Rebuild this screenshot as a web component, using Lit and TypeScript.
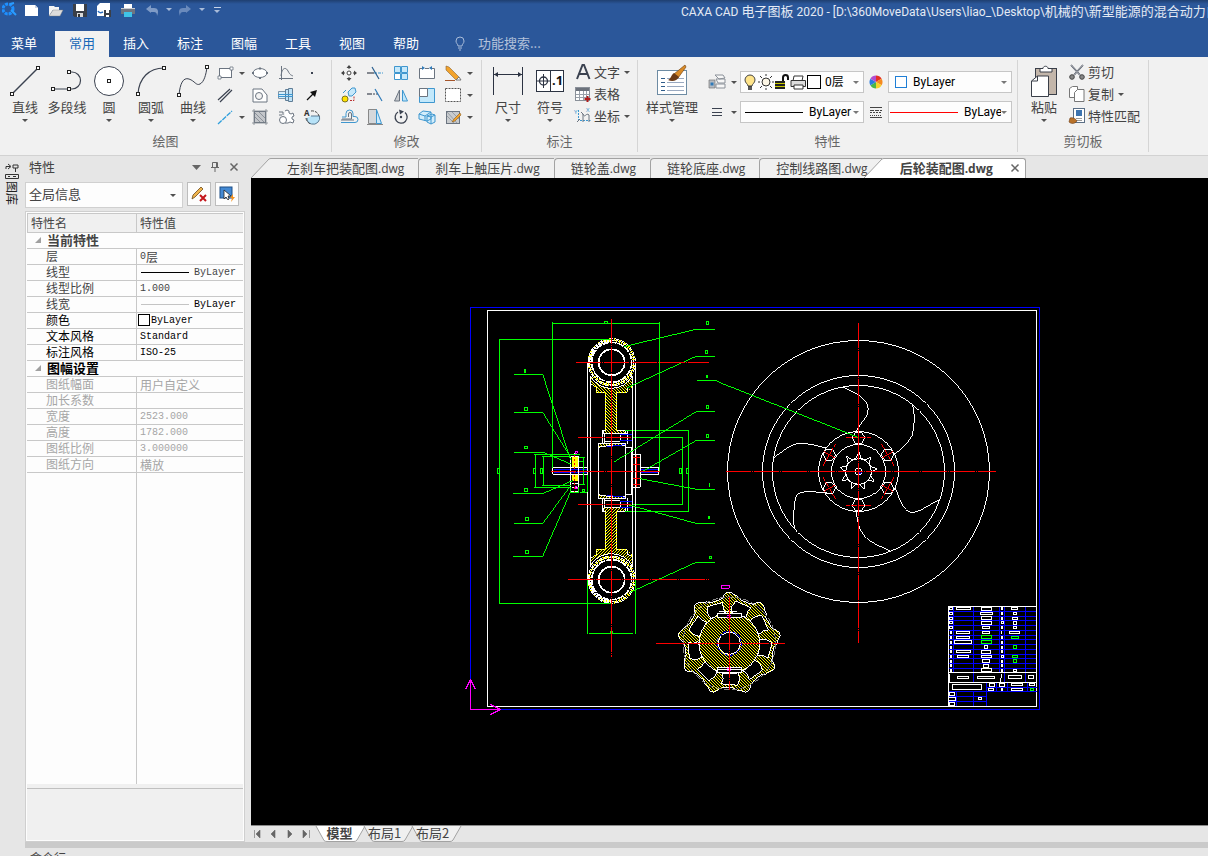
import { LitElement, html, svg, css, nothing, TemplateResult, SVGTemplateResult } from "lit";
import { customElement, property } from "lit/decorators.js";
import { classMap } from "lit/directives/class-map.js";

/* Latin runs are set a size smaller than the Chinese text round them. */
const mixed = (text: string) =>
  text.split(/([\x20-\x7e]+)/).map((part) => (/^[\x20-\x7e]+$/.test(part) ? html`<span class="latin">${part}</span>` : part));

const INK = "#3b4250";
const GREY = "#6b7480";
const BLUE = "#3f97cf";
const PALE = "#cdeafb";

type Art = SVGTemplateResult;

const node = (x: number, y: number): Art =>
  svg`<rect x=${x - 1.5} y=${y - 1.5} width="3" height="3" fill="#fff" stroke="#222" />`;

/* 36 x 36 ribbon pictures */
const big: Record<string, Art> = {
  line: svg`<path d="M5 31L31 5" stroke=${INK} stroke-width="1.4"/>${node(5, 31)}${node(31, 5)}`,
  poly: svg`<path d="M4 26H20M20 9h3a8.500 8.500 0 0 1 0 17h-3" stroke=${INK} stroke-width="1.200" fill="none"/>${node(4, 26)}${node(20, 26)}${node(20, 9)}`,
  circle: svg`<circle cx="18" cy="18" r="14.500" fill="#fff" stroke=${INK}/>${node(18, 18)}`,
  arc: svg`<path d="M5 31C6 15 16 5 31 5" stroke=${INK} fill="none" stroke-width="1.200"/>${node(5, 31)}${node(31, 5)}`,
  curve: svg`<path d="M4 32C5 21 8 14 14 16c6 2 7 7 11 5s6-9 7-17" stroke=${INK} fill="none"/>${node(4, 32)}${node(32, 4)}`,
  dim: svg`<path d="M3.500 4v28M32.500 4v28M4 11.500h28" stroke="#2c3342" fill="none"/><path d="M4 11.500l4-2.500v5zM32 11.500l-4-2.500v5z" fill="#2c3342"/>`,
  symbol: svg`<rect x="4.500" y="7.500" width="27" height="21" fill="#fff" stroke="#2c3342"/><path d="M18.500 8v20M5 18h13M11.500 11v14" stroke="#2c3342"/><circle cx="11.500" cy="18" r="4" fill="none" stroke="#2c3342" stroke-width="1.300"/><text x="20" y="22" class="glyph">.1</text>`,
  style: svg`<rect x="3.500" y="7.500" width="29" height="24" fill="#fff" stroke="#6d8ba3"/><path d="M7 15.500h4M7 19.500h4M7 23.500h4M7 27.500h4" stroke="#2f5c8a"/><path d="M13 15.500h17M13 19.500h17M13 23.500h17M13 27.500h17" stroke="#9aa9c0"/><path d="M31 2L20 11l4 4 8-11z" fill="#d98a26" stroke="#7b4a18" stroke-width=".7"/><path d="M20 10l5 4c-2 4-7 5-11 3 3-1 3-5 6-7z" fill="#6b3a16"/>`,
  paste: svg`<rect x="9.500" y="5.500" width="21" height="26" fill="#c3b6aa" stroke="#3a3f49"/><path d="M14 9V5.500h3c0-3 5-3 5 0h4V9z" fill="#fff" stroke="#3a3f49"/><path d="M5.500 33.500V18l6-5h11v20.500z" fill="#fff" stroke="#3a3f49"/><path d="M5.500 18h6v-5" fill="none" stroke="#3a3f49"/>`,
};

/* 20 x 20 ribbon pictures */
const small: Record<string, Art> = {
  rect: svg`<rect x="4.500" y="5.500" width="12" height="9" fill="#fff" stroke=${GREY}/><path d="M3 13h3v3H3zM15 4h3v3h-3z" fill="#fff" stroke=${GREY} stroke-width=".8"/>`,
  ellipse: svg`<ellipse cx="10" cy="10" rx="7" ry="4.500" fill="#fff" stroke=${GREY}/><path d="M9 4.500h2v2H9zM9 14h2v2H9zM2 9h2v2H2zM16 9h2v2h-2z" fill=${GREY}/>`,
  fx: svg`<path d="M5.500 3v14M3 15.500h14M5 13C6 4 10 4 12 8s3 4 5 5" fill="none" stroke=${GREY}/>`,
  point: svg`<path d="M9 9h2v2H9z" fill=${INK}/>`,
  parallel: svg`<path d="M3 15L15 4M5 17L17 5" stroke=${INK} stroke-width="1.200"/>`,
  region: svg`<path d="M3 4h9l5 6v7H3z" fill="#fff" stroke=${GREY}/><circle cx="9" cy="11" r="3.500" fill="#f3f3f3" stroke=${GREY}/>`,
  bolt: svg`<path d="M2.500 6.500h7v7h-7z" fill="#d7edf9" stroke="#7d95a8"/><path d="M9.500 4.500h3v11h-3zM12.500 3.500h4v13h-4z" fill="#bfe2f6" stroke="#607d96"/><path d="M2 9.500h15M2 11.500h15" stroke=${BLUE}/>`,
  arrow: svg`<path d="M5 15l6-6" stroke="#111" stroke-width="1.300"/><path d="M15 5l-2 7-5-5z" fill="#111"/>`,
  cline: svg`<path d="M3 17L17 4" stroke="#2f9fdc" stroke-width="1.300" stroke-dasharray="5 1"/>`,
  hatch: svg`<rect x="4.500" y="4.500" width="11" height="11" fill="#c3c6ca" stroke=${GREY}/><path d="M5 10l5 5M5 6l9 9M9 5l6 6M4 2v16M16 2v16M2 4h16M2 16h16" stroke="#7d858e" stroke-width=".8"/>`,
  gear: svg`<path d="M9 4l2-1 2 1v2l2 1 2-1 1 3-2 1v2l2 1-1 3-3-1-2 1H9" fill="#fff" stroke=${GREY}/><circle cx="7" cy="13" r="3.500" fill="#fff" stroke=${GREY}/><path d="M3 8h3M3 5h4v3" stroke=${GREY} fill="none"/>`,
  fill: svg`<path d="M9 9h8.500a6.500 6.500 0 0 1-8 8A6 6 0 0 1 5 11" fill="#b8e3f8" stroke="#5a7b93"/><path d="M9 4a7 7 0 0 1 8 5M4 11a7 7 0 0 0 5 6" fill="none" stroke="#444" stroke-dasharray="3 1"/><text x="2" y="9" class="mini">A</text>`,
  move: svg`<circle cx="10" cy="10" r="2" fill="#fff" stroke="#444"/><path d="M10 2l2.500 3h-5zM10 18l2.500-3h-5zM2 10l3-2.500v5zM18 10l-3-2.500v5z" fill="#444"/><path d="M10 4v2M10 14v2M4 10h2M14 10h2" stroke="#444"/>`,
  trim: svg`<path d="M2 10h7" stroke=${INK} stroke-width="1.200"/><path d="M9 10h9" stroke=${BLUE} stroke-dasharray="3 1"/><path d="M7 4l7 12" stroke="#2a5f8f" stroke-width="1.200"/>`,
  array: svg`<path d="M3.500 3.500h6v6h-6zM10.500 3.500h6v6h-6zM10.500 10.500h6v6h-6z" fill="#c6e8fa" stroke=${BLUE}/><path d="M3.500 10.500h6v6h-6z" fill="#fff" stroke=${BLUE}/>`,
  stretch: svg`<path d="M5 5.500H2.500v10h15v-10H15M8 5.500h4" fill="#fff" stroke=${GREY}/><path d="M5 3v4l3-2zM15 3v4l-3-2z" fill="#2f7ab8"/>`,
  erase: svg`<path d="M3 3l3 1 10 10-3 3L3 7z" fill="#f2a32c" stroke="#8a6336" stroke-width=".6"/><path d="M13 17l3-3 2 3z" fill="#fff" stroke="#777"/><path d="M2 17.500h10" stroke="#a5552a"/>`,
  copy: svg`<path d="M9 7l4-4h3l1 4-4 4h-3z" fill="#c6e8fa" stroke=${BLUE}/><circle cx="6" cy="14" r="3" fill="#ffe100" stroke="#7d7420"/><path d="M11 15.500h4v-4" stroke="#b33" fill="none" stroke-dasharray="2 1"/><path d="M4 8l3-3" stroke=${BLUE}/>`,
  extend: svg`<path d="M2 9h5" stroke=${INK} stroke-width="1.200"/><path d="M8 9h5" stroke=${INK} stroke-dasharray="2 1"/><path d="M10 4l7 12" stroke="#2f7ab8" stroke-width="1.200"/>`,
  mirror: svg`<path d="M8.500 5v11h-5z" fill="#c9ccd0" stroke=${GREY}/><path d="M11.500 5v11h5z" fill="#bfe6fa" stroke=${BLUE}/>`,
  scale: svg`<path d="M2.500 3.500h15v14h-15z" fill="#c2e8fb" stroke=${BLUE}/><path d="M2.500 3.500h8v8h-8z" fill="#fff" stroke=${GREY}/>`,
  dotted: svg`<rect x="2.500" y="3.500" width="15" height="13" fill="#fff" stroke="#555" stroke-dasharray="2 1"/>`,
  offset: svg`<path d="M2 15.500h14a3 3 0 0 0 0-6h-2V6.500a3.500 3.500 0 0 0-7 0V10H3" fill="none" stroke=${BLUE}/><path d="M2 13h13M9.500 10V7a1.500 1.500 0 0 1 3 0v5H3" fill="none" stroke=${GREY}/>`,
  draft: svg`<path d="M3.500 2.500h8v14h-8z" fill="#d5d8db" stroke="#888"/><path d="M11.500 2.500l5 14h-5z" fill=${PALE} stroke=${BLUE}/><path d="M2 17.500h16" stroke="#888"/>`,
  rotate: svg`<path d="M7 5A6 6 0 1 0 14 5.500" fill="none" stroke=${INK} stroke-width="1.300"/><path d="M8 2.500l5 2-4 3z" fill=${INK}/><circle cx="10" cy="10" r="1.200" fill=${INK}/>`,
  solid: svg`<path d="M2 7l4-3 8 1v7l-4 2-8-2zM10 9l5-2 3 1v7l-4 2-4-2z" fill="#d3edfb" stroke=${BLUE}/><path d="M2 7l6 2 6-4M8 9v5M10 9l4 1 4-2M14 10v7" fill="none" stroke=${BLUE}/>`,
  edit: svg`<rect x="3.500" y="4.500" width="13" height="12" fill="#c8cbce" stroke=${GREY}/><path d="M4 9l7 7M4 5l10 11M9 5l7 7" stroke="#8b929a" stroke-width=".8"/><path d="M17 6l-6 6-2 3 3-1 6-6z" fill="#f2a32c" stroke="#8a5a1c" stroke-width=".6"/>`,
  text: svg`<path d="M4 17L9.500 3h1.500L16.500 17M6 12h8" fill="none" stroke=${INK} stroke-width="2"/>`,
  sheet: svg`<rect x="2.500" y="3.500" width="14" height="13" fill="#fff" stroke="#8a9099"/><path d="M3 4h13v3H3z" fill="#6c727c"/><path d="M3 10.500h13M3 13.500h13M6.500 7v9M10.500 7v9M13.500 7v9" stroke="#9aa1aa"/><path d="M14.500 12v6M11.500 15h6" stroke="#b01c1c" stroke-width="2"/>`,
  coord: svg`<path d="M5.500 4v10.500h12" fill="none" stroke=${BLUE} stroke-dasharray="2 1"/><path d="M8 6l2 2v8M10 8c2 5 3-2 6 1v7M4 16l3-3" fill="none" stroke=${GREY}/><text x="1" y="8" class="tag">Y</text><text x="13" y="6" class="tag">X</text>`,
  layers: svg`<path d="M8 3h8l2 3-6 1zM9 7h9v4h-7zM9 12h9v4H9z" fill="#f7f7f7" stroke="#8b9199"/><path d="M2 8h6v8H2z" fill="#b5bac1" stroke="#777" stroke-width=".7"/><path d="M3.500 10.500h3v3h-3z" fill="#2f7ab8"/>`,
  weight: svg`<path d="M5 6.500h10M5 10.500h10M5 13.500h10" stroke=${INK} stroke-width="1"/>`,
  wheel: svg`<g stroke="none"><path d="M10 10V3.500a6.500 6.500 0 0 1 5.600 3.200z" fill="#e53125"/><path d="M10 10l5.600-3.300a6.500 6.500 0 0 1 0 6.500z" fill="#f58a1f"/><path d="M10 10l5.600 3.200a6.500 6.500 0 0 1-5.600 3.300z" fill="#f5d32a"/><path d="M10 10v6.500a6.500 6.500 0 0 1-5.600-3.300z" fill="#49b649"/><path d="M10 10l-5.600 3.200a6.500 6.500 0 0 1 0-6.500z" fill="#2a7be0"/><path d="M10 10L4.400 6.700A6.500 6.500 0 0 1 10 3.500z" fill="#b24ed0"/></g>`,
  ltype: svg`<path d="M4 5.500h12M4 15.500h12" stroke="#444"/><path d="M4 8.500h12" stroke="#444" stroke-dasharray="4 1"/><path d="M4 10.500h12" stroke="#444" stroke-dasharray="2 1"/><path d="M4 13.500h12" stroke="#444" stroke-dasharray="1 1"/>`,
  cut: svg`<path d="M4 3l9 10M16 3L7 13" stroke=${INK} stroke-width="1.600"/><path d="M4 3l9 10M16 3L7 13" stroke="#eef0f2" stroke-width=".6"/><circle cx="5" cy="15" r="2.300" fill="#888" stroke="#444"/><circle cx="15" cy="15" r="2.300" fill="#888" stroke="#444"/>`,
  dup: svg`<path d="M2.500 13.500v-9l3-2h5v11z" fill="#fff" stroke="#777"/><path d="M7.500 17.500v-9l3-3h6.500v12z" fill="#fff" stroke="#777"/>`,
  match: svg`<rect x="6.500" y="2.500" width="11" height="14" fill="#fff" stroke="#5b6f86"/><path d="M9 4h6v6H9z" fill="#3d74b0"/><path d="M9 12.500h6M9 14.500h6" stroke="#999"/><path d="M3 12c3-1 6 1 7 3-2 3-6 3-8 1z" fill="#b9722a" stroke="#6b3a16" stroke-width=".6"/>`,
};

/* 16 x 16 title bar and combo pictures */
const tiny: Record<string, Art> = {
  file: svg`<path d="M1 3h10l3 3v8H1z" fill="#fff"/><path d="M11 3v3h3z" fill="#c9d3e4"/>`,
  open: svg`<path d="M1 14V4h5l1 1h4v3H5z" fill="#f4f4f4"/><path d="M5 8h10l-3 6H1z" fill="#dcdcdc" stroke="#7a7a7a" stroke-width=".4"/>`,
  save: svg`<path d="M1 2h14v13H2.500L1 13.500z" fill="#3a3f48"/><path d="M4 2h8v7H4z" fill="#fff"/><path d="M5 11h6v4H5z" fill="#d9d9d9"/><path d="M6 12h2v3H6z" fill="#333"/>`,
  saveas: svg`<path d="M4 1h10v13H1V4z" fill="#fff"/><path d="M8 8h7v7H8z" fill="#3a3f48"/><path d="M10 8h3v3h-3zM10 13h3v2h-3z" fill="#fff"/><path d="M2 9c1 2 3 2 5 1" stroke="#2d6fc0" fill="none" stroke-width="1.500"/>`,
  print: svg`<path d="M4 2h8v4H4z" fill="#fff"/><path d="M1 6h14v6H1z" fill="#6e7480"/><path d="M1 6h14v1H1z" fill="#c8ccd2"/><path d="M4 10h8v5H4z" fill="#3fc3e8"/>`,
  undo: svg`<path d="M2 7l5-4v8zM6 6h4c4 0 5 3 3 8 0-3-1-4-3-4H6z" fill="#7f9bc6"/>`,
  redo: svg`<path d="M14 7L9 3v8zM10 6H6c-4 0-5 3-3 8 0-3 1-4 3-4h4z" fill="#6a8abc"/>`,
  bulb: svg`<path d="M6 12c0-2-3-3-3-6a5 5 0 0 1 10 0c0 3-3 4-3 6z" fill="#ffe48a" stroke="#444"/><path d="M6 13h4M6 15h4" stroke="#222" stroke-width="1.500"/>`,
  sun: svg`<circle cx="8" cy="8" r="4" fill="#fdf7e6" stroke="#333"/><path d="M8 0v2M8 14v2M0 8h2M14 8h2M2 2l2 2M12 12l2 2M2 14l2-2M12 4l2-2" stroke="#333"/>`,
  lock: svg`<path d="M9 8V3.500a2.500 2.500 0 0 1 5 0V6" fill="none" stroke="#111" stroke-width="2"/><path d="M1 7h10v2H1zM1 10h10v2H1zM1 13h10v2H1z" fill="#222"/><path d="M1 9.500h10M1 12.500h10" stroke="#c8c800"/>`,
  printer: svg`<path d="M4 2h9l-1 5H3z" fill="#fff" stroke="#333"/><path d="M1 6.500h14.500v6H1z" fill="#ddd" stroke="#333"/><path d="M4 11h9v4H4z" fill="#fff" stroke="#333"/>`,
  swatch: svg`<rect x="1.500" y="1.500" width="13" height="13" fill="#fff" stroke="#000"/>`,
  cyan: svg`<rect x="2.500" y="2.500" width="11" height="11" fill="#fff" stroke="#1f7fd6"/>`,
  lamp: svg`<path d="M6 11c0-2-2-2.500-2-5a4 4 0 0 1 8 0c0 2.500-2 3-2 5zM6 13h4M7 15h2" fill="none" stroke="#a9bcd9"/>`,
  app: svg`<circle cx="6" cy="7" r="5" fill="none" stroke="#1e90ff" stroke-width="3" stroke-dasharray="3 1"/><path d="M9 8l5 5M8 2l4-1" stroke="#2a9cff" stroke-width="2"/>`,
  delpen: svg`<path d="M1 13l1-4 8-8 2 2-8 8z" fill="#f0b44c" stroke="#6b4a1c" stroke-width=".8"/><path d="M9 9l6 6M15 9l-6 6" stroke="#c4161c" stroke-width="2"/>`,
  pick: svg`<rect x="1" y="1" width="12" height="11" fill="#4389d3" stroke="#1f4f86"/><path d="M5 4v9l2-2 2 3 1-1-1-3h3z" fill="#fff" stroke="#222" stroke-width=".8"/><path d="M14 8l-3 4h2l-1 4 4-5h-2z" fill="#f7931e"/>`,
  pin: svg`<path d="M5.500 3.500h5v5h-5zM4 8.500h8M8 9v4M9.500 4v5" fill="none" stroke="#666"/>`,
  close: svg`<path d="M4.500 4.500l7 7M11.500 4.500l-7 7" stroke="#666" stroke-width="1.500"/>`,
  down: svg`<path d="M4 6h9l-4.500 5z" fill="#666"/>`,
};

const icon = (set: Record<string, Art>, name: string, size: number) =>
  html`<svg width=${size} height=${size} viewBox="0 0 ${size} ${size}" fill="none" aria-hidden="true">${set[name]}</svg>`;
const caret = html`<span class="caret" aria-hidden="true"></span>`;

const iconText = css`
  .glyph { font: bold 13px "Noto Sans", sans-serif; fill: #111; }
  .mini { font: bold 8px "Noto Sans", sans-serif; fill: #333; }
  .tag { font: 6px "Noto Sans", sans-serif; fill: #3f97cf; }
  .latin { font-family: "Open Sans", sans-serif; font-size: 12px; white-space: pre; }
  .caret { flex: none; width: 0; height: 0; border: 3px solid transparent; border-top-color: #505050; border-bottom: 0; }
  svg { display: block; flex: none; }
  button { border: 0; padding: 0; background: none; color: inherit; font: inherit; white-space: nowrap; }
  * { box-sizing: border-box; }
`;

@customElement("cad-ribbon")
export class CadRibbon extends LitElement {
  static styles = [
    iconText,
    css`
      :host { display: flex; height: 99px; padding-top: 3px; background: #f1f1f1; border-bottom: 1px solid #d2d2d2; color: #444; font-size: 13px; line-height: 16px; }
      .group { flex: none; display: flex; flex-direction: column; height: 92px; border-right: 1px solid #d5d5d5; }
      .body { display: flex; height: 73px; padding-top: 2px; }
      .name { text-align: center; color: #666; }
      .draw { width: 332px; }
      .modify { width: 150px; }
      .annotate { width: 156px; }
      .props { width: 380px; }
      .clip { width: 131px; }
      .clip .body, .props .body { padding-left: 3px; }
      .draw .body { padding-left: 4px; }
      .annotate .body { padding-left: 5px; }
      .large { display: flex; flex-direction: column; align-items: center; width: 42px; height: 67px; padding-top: 1px; }
      .large .caret { margin-top: 4px; }
      .wide { width: 62px; }
      .grid { display: grid; grid-template-columns: 35px 26px 26px 26px; grid-auto-rows: 22px; }
      .modify .grid { grid-template-columns: repeat(4, 26px) 36px; margin-left: 6px; }
      .tool { display: flex; align-items: center; gap: 4px; padding-left: 1px; }
      .list { display: grid; grid-auto-rows: 22px; margin-left: 2px; }
      .row { display: flex; align-items: center; gap: 1px; height: 20px; }
      .row .caret { margin-left: 3px; }
      .clip .list { margin-left: 0; }
      .clip .large { width: 46px; }
      .combos { display: grid; grid-template-columns: 34px 124px 24px 124px; grid-auto-rows: 22px; row-gap: 8px; align-items: center; margin: 9px 0 0 3px; }
      .combo { display: flex; align-items: center; height: 22px; border: 1px solid #c6c6c6; background: #fdfdfd; color: #000; padding-left: 1px; overflow: hidden; }
      .combo select { appearance: none; flex: 1; min-width: 0; height: 20px; padding: 0 0 0 3px; border: 0; background: none; color: #000; font: 12px Roboto, "Noto Sans CJK SC", sans-serif; }
      .combo .caret { margin-right: 4px; border-top-color: #777; }
      .wide-gap { padding-left: 4px; }
      .wide-gap select { padding-left: 4px; }
      .sample { flex: none; width: 58px; height: 1px; margin: 0 3px; background: #000; }
      .red { width: 68px; background: #f00; margin: 0 3px 0 0; }
      .wheel { justify-self: center; }
    `,
  ];

  private large(name: string, label: string, arrow = true, wide = false) {
    return html`<button class=${classMap({ large: true, wide })}>${icon(big, name, 36)}<span>${label}</span>${arrow ? caret : nothing}</button>`;
  }
  private tool(name: string, label: string, arrow = false) {
    return html`<button class="tool" aria-label=${label}>${icon(small, name, 20)}${arrow ? caret : nothing}</button>`;
  }
  private row(name: string, label: string, arrow = false) {
    return html`<button class="row">${icon(small, name, 20)}<span>${label}</span>${arrow ? caret : nothing}</button>`;
  }
  private group(cls: string, label: string, body: TemplateResult) {
    return html`<section class="group ${cls}" aria-label=${label}><div class="body">${body}</div><div class="name">${label}</div></section>`;
  }

  render() {
    return html`
      ${this.group("draw", "绘图", html`
        ${this.large("line", "直线")}${this.large("poly", "多段线", false)}${this.large("circle", "圆")}
        ${this.large("arc", "圆弧")}${this.large("curve", "曲线")}
        <div class="grid">
          ${this.tool("rect", "矩形", true)}${this.tool("ellipse", "椭圆")}${this.tool("fx", "公式曲线")}${this.tool("point", "点")}
          ${this.tool("parallel", "平行线")}${this.tool("region", "局部放大")}${this.tool("bolt", "轴")}${this.tool("arrow", "箭头")}
          ${this.tool("cline", "中心线", true)}${this.tool("hatch", "剖面线")}${this.tool("gear", "齿轮")}${this.tool("fill", "填充")}
        </div>`)}
      ${this.group("modify", "修改", html`
        <div class="grid">
          ${this.tool("move", "平移")}${this.tool("trim", "裁剪")}${this.tool("array", "阵列")}${this.tool("stretch", "拉伸")}${this.tool("erase", "删除", true)}
          ${this.tool("copy", "平移复制")}${this.tool("extend", "延伸")}${this.tool("mirror", "镜像")}${this.tool("scale", "缩放")}${this.tool("dotted", "分解", true)}
          ${this.tool("offset", "等距线")}${this.tool("draft", "过渡")}${this.tool("rotate", "旋转")}${this.tool("solid", "打断")}${this.tool("edit", "编辑", true)}
        </div>`)}
      ${this.group("annotate", "标注", html`
        ${this.large("dim", "尺寸")}${this.large("symbol", "符号")}
        <div class="list">${this.row("text", "文字", true)}${this.row("sheet", "表格")}${this.row("coord", "坐标", true)}</div>`)}
      ${this.group("props", "特性", html`
        ${this.large("style", "样式管理", true, true)}
        <div class="combos">
          ${this.tool("layers", "图层", true)}
          <div class="combo">
            ${icon(tiny, "bulb", 16)}${icon(tiny, "sun", 16)}${icon(tiny, "lock", 16)}${icon(tiny, "printer", 16)}${icon(tiny, "swatch", 16)}
            <select aria-label="当前图层"><option>0层</option></select>${caret}
          </div>
          <span class="wheel">${icon(small, "wheel", 20)}</span>
          <div class="combo wide-gap">${icon(tiny, "cyan", 16)}<select aria-label="颜色"><option>ByLayer</option></select>${caret}</div>
          ${this.tool("weight", "线型", true)}
          <div class="combo"><span class="sample"></span><select aria-label="线型"><option>ByLayer</option></select>${caret}</div>
          <span class="wheel">${icon(small, "ltype", 20)}</span>
          <div class="combo"><span class="sample red"></span><select aria-label="线宽"><option>ByLayer</option></select>${caret}</div>
        </div>`)}
      ${this.group("clip", "剪切板", html`
        ${this.large("paste", "粘贴")}
        <div class="list">${this.row("cut", "剪切")}${this.row("dup", "复制", true)}${this.row("match", "特性匹配")}</div>`)}
    `;
  }
}

interface Prop { name: string; value?: string; kind?: "line" | "thin" | "swatch"; tone?: "dark" | "off"; head?: boolean; }

const PROPS: Prop[] = [
  { name: "当前特性", head: true },
  { name: "层", value: "0层" },
  { name: "线型", value: "ByLayer", kind: "line" },
  { name: "线型比例", value: "1.000" },
  { name: "线宽", value: "ByLayer", kind: "thin" },
  { name: "颜色", value: "ByLayer", kind: "swatch", tone: "dark" },
  { name: "文本风格", value: "Standard", tone: "dark" },
  { name: "标注风格", value: "ISO-25", tone: "dark" },
  { name: "图幅设置", head: true, tone: "dark" },
  { name: "图纸幅面", value: "用户自定义", tone: "off" },
  { name: "加长系数", value: "", tone: "off" },
  { name: "宽度", value: "2523.000", tone: "off" },
  { name: "高度", value: "1782.000", tone: "off" },
  { name: "图纸比例", value: "3.000000", tone: "off" },
  { name: "图纸方向", value: "横放", tone: "off" },
];

@customElement("cad-properties")
export class CadProperties extends LitElement {
  static styles = [
    iconText,
    css`
      :host { display: flex; flex-direction: column; width: 220px; flex: none; color: #444; font-size: 13px; }
      .head { display: flex; align-items: center; height: 26px; padding: 0 2px 4px 4px; }
      .head h2 { flex: 1; margin: 0; font-size: 13px; font-weight: 400; line-height: 18px; }
      .head button { width: 19px; display: flex; justify-content: center; }
      .pick { display: flex; gap: 4px; height: 26px; padding-right: 6px; }
      .pick .box { flex: 1; display: flex; align-items: center; border: 1px solid #d0d0d0; background: #fdfdfd; }
      .pick select { appearance: none; flex: 1; border: 0; background: none; padding: 0 3px 3px; font: inherit; color: #444; }
      .pick .caret { margin-right: 6px; }
      .pick button { width: 24px; height: 24px; display: grid; place-items: center; border: 1px solid #bdbdbd; background: #fdfdfd; }
      .frame { flex: 1; display: flex; flex-direction: column; margin-top: 3px; border: 1px solid #cfcfcf; padding: 1px; background: #fdfdfd; min-height: 0; }
      .body { flex: 1; display: flex; flex-direction: column; min-height: 0; }
      table { border-collapse: separate; border-spacing: 0; table-layout: fixed; width: 100%; font-size: 12px; line-height: 13px; }
      th, td { text-align: left; vertical-align: top; font-weight: 400; padding: 0; height: 16px; border-bottom: 1px solid #c8c8c8; white-space: nowrap; }
      th { height: 20px; background: #f0f0f0; border: 1px solid #c8c8c8; border-right: 0; padding: 2px 0 0 3px; }
      td:first-child { padding-left: 19px; }
      td + td { border-left: 1px solid #c8c8c8; padding-left: 3px; }
      .name { width: 109px; }
      .section td:first-child { padding-left: 8px; font-weight: 700; font-size: 13px; }
      .section .in { gap: 6px; height: 13px; }
      .tri { border: 3px solid #a0a0a0; border-top-color: transparent; border-left-color: transparent; }
      .in { display: flex; align-items: center; height: 14px; }
      .latin { font: 10px "Liberation Mono", monospace; padding-top: 1px; }
      .rest { flex: 1; display: flex; }
      .rest::before { content: ""; width: 109px; border-right: 1px solid #c8c8c8; margin-right: 1px; }
      .dark, .black { color: #000; }
      .off { color: #a6a6a6; }
      .stroke { width: 48px; height: 1px; margin: 0 5px 0 1px; background: #000; }
      .pale { background: #c4c4c4; }
      .swatch { width: 12px; height: 12px; margin-left: -2px; margin-right: 1px; border: 1px solid #000; background: #fff; }
      .help { height: 56px; background: #f0f0f0; padding-top: 4px; }
      .help::before { content: ""; display: block; height: 1px; background: #c0c0c0; }
    `,
  ];

  private value(p: Prop) {
    const mark = p.kind === "line" ? html`<span class="stroke"></span>`
      : p.kind === "thin" ? html`<span class="stroke pale"></span>`
      : p.kind === "swatch" ? html`<span class="swatch"></span>` : nothing;
    return html`<div class=${classMap({ in: true, black: p.kind === "thin" })}>${mark}${mixed(p.value ?? "")}</div>`;
  }

  render() {
    return html`
      <div class="head"><h2>特性</h2>
        <button aria-label="菜单">${icon(tiny, "down", 16)}</button>
        <button aria-label="固定">${icon(tiny, "pin", 16)}</button>
        <button aria-label="关闭">${icon(tiny, "close", 16)}</button>
      </div>
      <div class="pick">
        <label class="box"><select aria-label="选择对象"><option>全局信息</option></select>${caret}</label>
        <button aria-label="清除选择">${icon(tiny, "delpen", 16)}</button>
        <button aria-label="快速选择">${icon(tiny, "pick", 16)}</button>
      </div>
      <div class="frame">
        <div class="body">
          <table>
            <thead><tr><th class="name">特性名</th><th>特性值</th></tr></thead>
            <tbody>${PROPS.map((p) => p.head
              ? html`<tr class="section ${p.tone ?? ""}"><td colspan="2"><div class="in"><span class="tri"></span>${p.name}</div></td></tr>`
              : html`<tr class=${p.tone ?? ""}><td>${p.name}</td><td>${this.value(p)}</td></tr>`)}</tbody>
          </table>
          <div class="rest"></div>
        </div>
        <div class="help"></div>
      </div>`;
  }
}

/* ---- drawing geometry; each view is laid out in thirds of a screen pixel ---- */
const polar = (cx: number, cy: number, r: number, deg: number) => {
  const a = (deg * Math.PI) / 180;
  return [cx + r * Math.cos(a), cy + r * Math.sin(a)];
};
const pts = (list: number[][]) => list.map((p) => p.map((n) => n.toFixed(1)).join(",")).join(" ");
const box = (x: number, y: number, w: number, h: number, cls = "w") =>
  svg`<rect class=${cls} x=${x - w / 2} y=${y - h / 2} width=${w} height=${h} />`;

const LEADERS = [
  "432,140 648,88 705,88", "440,264 648,169 705,169", "652,241 705,241 720,247", "402,486 650,334 705,334",
  "490,513 650,421 705,421", "480,536 650,568 705,568", "440,613 648,670 705,670", "450,877 648,787 705,787",
  "101,223 188,223 272,480", "101,337 188,337 272,472", "101,457 190,457 272,492", "98,580 190,580 280,541",
  "101,670 188,670 268,563", "98,769 188,769 272,575",
];
const MARKS = [
  [682, 69, 6, 9], [679, 156, 6, 9], [681, 229, 2, 6], [682, 321, 6, 9], [682, 408, 6, 9], [689, 555, 2, 9], [687, 652, 2, 6],
  [691, 772, 6, 6], [135, 213, 2, 9], [138, 327, 9, 9], [138, 442, 9, 6], [138, 570, 9, 9], [141, 657, 9, 9], [141, 756, 9, 9],
  [55, 513, 6, 15], [163, 513, 6, 15], [185, 513, 6, 15], [603, 514, 6, 15], [622, 514, 6, 15], [377, 67, 9, 6], [394, 997, 6, 6], [311, 572, 6, 6],
];

const half = (flip: boolean) => svg`
  <g transform=${flip ? "translate(0 1026) scale(1 -1)" : ""}>
    <path class="w hatch" d="M331 228A72 72 0 0 0 457 228V258L442 263V277H411V391H437V402H371V391H378V277H349V262L331 250Z"/>
    <path class="y dots" d="M331 228V250L349 262V277H378V391M411 391V277H442L457 258V228"/>
    <circle class="w black" cx="395" cy="187" r="67"/>
    <circle class="rim" cx="395" cy="187" r="67"/>
    <path class="rim pale" d="M395 120A67 67 0 0 0 328 187"/>
    <circle class="w" cx="395" cy="187" r="71" stroke-dasharray="14 3"/>
    <circle class="y" cx="395" cy="187" r="71" stroke-dasharray="3 14"/>
    <circle class="w thick" cx="395" cy="187" r="60" stroke-dasharray="20 3"/>
    <circle class="w thick" cx="395" cy="187" r="39" />
    <path class="w" d="M367 391V432M373 402V428M442 391V432M373 402H442M421 402V424H373"/>
    <path class="b" d="M421 403H455M421 422H455"/>
    <path class="w hatch" d="M355 430H437V436C400 440 385 434 355 442Z"/>
    <path class="b" d="M380 440L437 434"/>
    <path class="g" d="M435 391H628M455 412H610"/>
  </g>`;

const sideView = svg`
  <g transform="translate(480 300) scale(.333333)">
    ${half(false)}${half(true)}
    <path class="w" d="M322 187V838M331 228V800M457 228V800M466 187V838"/>
    <path class="w" d="M355 430V597M437 430V597M437 442H455V583H437M455 463H481V562H455Z"/>
    <path class="w" d="M322 502H218V523H322M482 502H537V523H482"/>
    <path class="b" d="M221 508H320M221 519H320M482 508H534M482 519H534"/>
    <rect class="w" x="272" y="469" width="24" height="105"/>
    <rect x="275" y="472" width="20" height="30" fill="#ff0"/><rect x="275" y="524" width="20" height="18" fill="#ff0"/>
    <path class="w" d="M284 458V470M275 552H296M275 562H296"/>
    <path class="m" d="M286 454h6v6h-6zM286 561h6v6h-6z"/>
    <path class="r" d="M284 466V575" stroke-dasharray="6 6"/>
    <path class="g" d="M58 118V910M58 118H395M58 910H395M217 66V503M217 70H538M538 66V515M322 838V1003M466 838V1003M328 1002H460"/>
    <path class="g" d="M625 391V634M607 412V613M162 463H300M166 463V562M162 562H272M190 469V556M187 469H272M187 556H272M298 472H314M311 472V553M298 484H311M298 553H314M322 525V577H300M272 562V577H296V560"/>
    ${LEADERS.map((l) => svg`<polyline class="g" points=${l} />`)}
    ${MARKS.map(([x, y, w, h]) => box(x, y, w, h, "g"))}
    <path class="r centre" d="M394 57V1070M288 187H687M294 412H457M213 514H540M294 613H457M264 838H687"/>
    <path class="r" d="M469 464V560M459 472H479M459 493H479M459 535H479M459 553H479"/>
  </g>`;

const star: number[][] = [];
for (let k = 0; k < 9; k++) {
  star.push(polar(415, 454, 40, -100 + 40 * k), polar(415, 454, 57, -88 + 40 * k), polar(415, 454, 40, -78 + 40 * k));
}
const hexagon = (cx: number, cy: number) => pts([0, 60, 120, 180, 240, 300].map((a) => polar(cx, cy, 19, a)));

const wheelView = svg`
  <g transform="translate(720 320) scale(.333333)">
    ${[393, 288, 258, 120, 81, 10].map((r) => svg`<circle class="w" cx="415.500" cy="454.500" r=${r} />`)}
    <circle class="w" cx="415.500" cy="454.500" r="39" />
    <polyline class="w" points=${pts([...star, star[0]])} />
    <path class="w" d="M365 200C400 215 435 232 443 255C451 290 425 300 409 334M575 250L580 262C586 300 580 330 577 345C560 375 545 385 525 402M163 412C200 385 215 372 240 370C270 370 290 378 318 384M223 627C219 590 222 545 230 525C245 512 270 514 322 519M409 575C413 615 420 635 440 655C465 675 495 685 510 692M525 500C540 545 555 577 575 577C600 577 625 555 660 538"/>
    ${[-90, -30, 30, 90, 150, 210].map((a) => {
      const [x, y] = polar(415.500, 454.500, 101, a);
      const turn = a + 90;
      return svg`<polygon class="w" points=${hexagon(x, y)} /><path class="r" d="M-38 0H38M0 -19V19" stroke-dasharray="18 3" transform="translate(${x} ${y}) rotate(${turn})"/>`;
    })}
    <path class="b" d="M418 454h6v6h-6z"/>
    <path class="g" d="M0 188L415 352"/>
    <path class="r centre" d="M415.500 9V969M18 454.500H828"/>
  </g>`;

const teeth: number[][] = [];
const windows: string[] = [];
for (let k = 0; k < 9; k++) {
  const a = -90 + 40 * k;
  for (const [r, d] of [[134, -13], [138, -8], [146, -6], [154, -2], [154, 2], [146, 6], [142, 11], [134, 15]]) teeth.push(polar(208, 205, r, a + d));
  windows.push(pts([[93, 3], [112, 4], [128, 9], [124, 20], [124, 31], [108, 30], [93, 33]].map(([r, d]) => polar(208, 205, r, a + d))));
}

const sprocketView = svg`
  <g transform="translate(660 575) scale(.333333)">
    <polygon class="w hatch" points=${pts(teeth)} />
    <circle cx="208" cy="205" r="139" fill="none" stroke="#888" stroke-width="3" stroke-dasharray="18 6"/>
    ${windows.map((w) => svg`<polygon class="w black" points=${w} />`)}
    <circle class="w hatch" cx="208" cy="205" r="91"/>
    <rect class="w black" x="172" y="115" width="72" height="14"/><rect class="w black" x="172" y="278" width="72" height="14"/>
    <path class="w" d="M178 109H232M172 284H244"/>
    <circle class="w black" cx="208" cy="205" r="33"/>
    <circle class="b" cx="208" cy="205" r="36" stroke-dasharray="9 6"/>
    <path class="m" d="M184 31H208V40H184ZM202 123H214M202 128H214M202 281H214M202 286H214"/>
    <path class="r centre" d="M0 205.500H375M208.500 66V345M-12 205.500H0"/>
  </g>`;

const ROWS = [34, 49, 63, 77, 91, 105, 121, 133, 149, 163, 178, 191, 205, 220, 232];
const GREEN_MID = new Set([6, 7]);
const GREEN_RIGHT = new Set([6, 8, 10, 11]);
const MID_W = [30, 36, 30, 30, 20, 20, 30, 30, 9, 27, 30, 20, 15, 30];
const RIGHT_W = [18, 8, 16, 8, 8, 30, 20, 0, 10, 0, 16, 10, 0, 10];

const titleBlock = svg`
  <g transform="translate(935 595) scale(.333333)">
    <path class="b" d="${ROWS.slice(1, -1).map((y) => `M42 ${y}.5H303`).join("")}M55.500 36V232M115.500 36V262M193.500 36V232M208.500 36V262M271.500 36V262"/>
    <path class="b" d="M42 289.500H305M154 277.500H305M154.500 262V333M184.500 262V289M217.500 262V289M277.500 262V289M64.500 289V333M115.500 289V333M42 304.500H154M42 319.500H154"/>
    <path class="w" d="M41 34.500H305M41 34V334M41 232.500H305M41 262.500H305M199 236V250H196V262M44 236V262"/>
    ${ROWS.slice(0, -1).map((y, i) => {
      const c = (y + ROWS[i + 1]) / 2;
      return svg`
        ${i < 5 ? box(48, c, 8, 6) : svg`<rect x="45" y=${c - 4} width="6" height="9" fill="#fff"/>`}
        ${[0, 5, 6, 7, 9, 10].includes(i) ? box(85, c, [42, 0, 0, 0, 0, 40, 40, 52, 0, 42, 34][i], 7) : nothing}
        ${box(154, c, MID_W[i], 8, GREEN_MID.has(i) ? "g" : "w")}
        ${i === 3 || i === 10 ? box(202, c, 6, 6) : svg`<rect x="199" y=${c - 4} width=${i % 5 === 0 && i ? 3 : 6} height="9" fill="#fff"/>`}
        ${RIGHT_W[i] ? box(240, c, RIGHT_W[i], 7, GREEN_RIGHT.has(i) ? "g" : "w") : nothing}`;
    })}
    ${box(84, 247, 34, 7)}${box(154, 247, 50, 7)}${box(240, 246, 40, 10)}${box(288, 246, 16, 10)}
    ${box(96, 276, 88, 15)}${box(171, 270, 16, 10)}${box(201, 270, 16, 10)}${box(247, 268, 32, 7)}${box(291, 268, 16, 7)}
    ${box(169, 284, 14, 7)}${box(201, 284, 3, 7)}${box(247, 284, 32, 7)}${box(291, 284, 10, 7, "g")}
    ${box(51, 297, 16, 9)}${box(52, 312, 20, 9)}${box(51, 327, 16, 9)}${box(135, 310, 10, 7)}
  </g>`;

@customElement("cad-drawing")
export class CadDrawing extends LitElement {
  static styles = css`
    :host { display: block; background: #000; min-height: 0; overflow: hidden; }
    svg { display: block; width: 100%; height: 100%; shape-rendering: crispEdges; }
    .w, .g, .r, .b, .m, .y, .rim { fill: none; stroke-width: 3; }
    .w { stroke: #fff; }
    .g { stroke: #0f0; }
    .r { stroke: #f00; }
    .b { stroke: #00f; }
    .m { stroke: #f0f; }
    .y { stroke: #ff0; }
    .rim { stroke: #ff0; stroke-width: 9; stroke-dasharray: 3 5; }
    .rim.pale { stroke: #fff; stroke-dasharray: 6 3; }
    .thick { stroke-width: 5; }
    .dots { stroke-dasharray: 6 3; }
    .black { fill: #000; }
    .hatch { fill: url(#hatch); }
    .centre { stroke-dasharray: 75 3 3 3; }
    .unit { stroke-width: 1; }
  `;
  render() {
    return html`<svg viewBox="251 178 957 647" preserveAspectRatio="xMidYMid meet" role="img" aria-label="后轮装配图">
      <defs><pattern id="hatch" width="9" height="9" patternUnits="userSpaceOnUse"><rect width="9" height="9" fill="#000"/><path d="M-3 -3L12 12M-3 6L3 12M6 -3L12 3" stroke="#ff0" stroke-width="3"/></pattern></defs>
      <path class="b unit" d="M470.500 709.500V307.500H1039.500V709.500H470.500"/>
      <path class="w unit" d="M487.500 310.500H1036.500V706.500H487.500Z"/>
      ${sideView}${wheelView}${sprocketView}${titleBlock}
      <path class="m unit" d="M470.500 709.500V679.500L465.500 689.500M470.500 679.500L475.500 689.500M470.500 709.500H500.500L490.500 704.500M500.500 709.500L490.500 714.500"/>
    </svg>`;
  }
}

@customElement("cad-tab")
export class CadTab extends LitElement {
  @property() label = "";
  @property({ type: Boolean }) active = false;
  @property({ type: Boolean }) first = false;
  static styles = [
    iconText,
    css`
      :host { display: block; flex: none; font-size: 13px; line-height: 18px; color: #444; }
      :host([active]) { margin-left: -18px; z-index: 1; font-weight: 700; }
      .tab { display: flex; height: 20px; align-items: stretch; }
      .face { flex: 1; display: flex; align-items: center; padding: 0 14px 1px 16px; border: 1px solid #a2a2a2; border-bottom: 0; border-right: 0; border-radius: 4px 0 0 0; background: #f0f0f0; }
      .slanted { border-left: 0; border-radius: 0; }
      .on { background: #fff; border-right: 1px solid #a2a2a2; border-radius: 0 3px 0 0; padding: 0 2px 1px 16px; gap: 14px; }
      .fill { fill: #f0f0f0; }
      .lit { fill: #fff; }
    `,
  ];
  render() {
    const slant = this.first || this.active;
    return html`<div class="tab" role="tab" aria-selected=${this.active}>
      ${slant ? html`<svg width="20" height="20" viewBox="0 0 20 20"><path class=${this.active ? "lit" : "fill"} d="M0 20L18 1Q19 .5 20 .5V20Z"/><path d="M0 20L18 1Q19 .5 20 .5" fill="none" stroke="#a2a2a2"/></svg>` : nothing}
      <div class=${classMap({ face: true, slanted: slant, on: this.active })}><button>${mixed(this.label)}</button>
      ${this.active ? html`<button aria-label="关闭">${icon(tiny, "close", 16)}</button>` : nothing}</div>
    </div>`;
  }
}

@customElement("app-root")
export class AppRoot extends LitElement {
  static styles = [
    iconText,
    css`
      :host { display: flex; flex-direction: column; height: 100vh; overflow: hidden; background: #e6e6e6; font-family: "Noto Sans CJK SC", sans-serif; font-size: 13px; color: #444; }
      .top { flex: none; background: linear-gradient(#1f3f70, #2b579a 4px); color: #fff; overflow: hidden; }
      .bar { display: flex; align-items: center; height: 31px; padding-bottom: 12px; }
      .quick { flex: none; display: flex; align-items: center; width: 681px; }
      .quick button { width: 24px; height: 18px; display: grid; place-items: center; }
      .quick .app { width: 20px; }
      .quick .drop { width: 9px; }
      .quick .caret { border-top-color: #a9bcd9; }
      .quick .more { width: 22px; align-content: center; gap: 2px; }
      .more::before { content: ""; width: 7px; height: 1px; background: #c8d4e8; }
      .title { margin: 0; font-size: 13px; font-weight: 400; line-height: 18px; white-space: nowrap; color: #e4eaf4; padding-top: 3px; }
      .title .latin { font-family: Roboto, sans-serif; }
      .menu { display: flex; height: 26px; }
      .menu button { width: 54px; padding-bottom: 4px; }
      .menu button:first-child { width: 48px; margin-right: 7px; }
      .menu .on { background: #f1f1f1; color: #1668b8; }
      .search { display: flex; align-items: center; gap: 10px; margin-left: 19px; padding-bottom: 3px; }
      .search input { width: 120px; border: 0; padding: 0; background: none; font: inherit; color: inherit; }
      .search input::placeholder { color: #b4c2da; opacity: 1; }
      cad-ribbon { flex: none; }
      .work { flex: 1; display: flex; min-height: 0; }
      .dock { flex: none; width: 25px; padding: 6px 0 0 5px; }
      .dock button { display: flex; flex-direction: column; align-items: center; width: 14px; color: #222; }
      .side { writing-mode: vertical-rl; text-orientation: sideways; font-size: 12px; line-height: 14px; margin-top: 1px; }
      .view { flex: 1; display: flex; flex-direction: column; min-width: 0; margin-left: 6px; }
      .files { display: flex; flex: none; height: 22px; padding-top: 2px; overflow: hidden; }
      cad-drawing { flex: 1; }
      .sheets { flex: none; display: flex; height: 17px; border-top: 1px solid #8a8a8a; }
      .nav { display: flex; align-items: center; width: 64px; }
      .nav button { width: 16px; }
      .tabshape { display: grid; flex: none; margin-right: -3px; }
      .tabshape > * { grid-area: 1 / 1; }
      .tabshape button { line-height: 13px; padding: 0 8px 3px 0; }
      .tabshape .bold { font-weight: 700; padding-right: 2px; }
      .status { flex: none; height: 14px; margin-left: 25px; border-top: 6px solid #cacaca; padding-left: 5px; font-size: 12px; line-height: 20px; }
    `,
  ];

  private quick(name: string, label: string) {
    return html`<button aria-label=${label}>${icon(tiny, name, 16)}</button>`;
  }
  private sheet(label: string, on = false) {
    return html`<div class="tabshape"><svg width="51" height="16" viewBox="0 0 51 16"><path d="M1 0L9 14.500Q10 15.500 12 15.500H39Q41 15.500 42 14L50 0" fill=${on ? "#fff" : "#f0f0f0"} stroke="#a2a2a2"/></svg><button class=${on ? "bold" : ""}>${label}</button></div>`;
  }

  render() {
    const files = ["左刹车把装配图.dwg", "刹车上触压片.dwg", "链轮盖.dwg", "链轮底座.dwg", "控制线路图.dwg", "后轮装配图.dwg"];
    const arrows = ["M3.500 4v8M9 4v8L5 8z", "M8 4v8L4 8z", "M5 4v8l4-4z", "M4 4v8l4-4zM10.500 4v8"];
    return html`
      <header class="top">
        <div class="bar">
          <div class="quick">
            <button class="app" aria-label="CAXA">${icon(tiny, "app", 16)}</button>
            ${this.quick("file", "新建")}${this.quick("open", "打开")}${this.quick("save", "保存")}${this.quick("saveas", "另存为")}${this.quick("print", "打印")}
            ${this.quick("undo", "撤销")}<button class="drop" aria-label="撤销列表">${caret}</button>
            ${this.quick("redo", "恢复")}<button class="drop" aria-label="恢复列表">${caret}</button>
            <button class="more" aria-label="自定义">${caret}</button>
          </div>
          <h1 class="title">${mixed("CAXA CAD 电子图板 2020 - [D:\\360MoveData\\Users\\liao_\\Desktop\\机械的\\新型能源的混合动力自")}</h1>
        </div>
        <nav class="menu">
          ${["菜单", "常用", "插入", "标注", "图幅", "工具", "视图", "帮助"].map((m) => html`<button class=${m === "常用" ? "on" : ""}>${m}</button>`)}
          <label class="search">${icon(tiny, "lamp", 16)}<input placeholder="功能搜索..." aria-label="功能搜索" /></label>
        </nav>
      </header>
      <cad-ribbon></cad-ribbon>
      <main class="work">
        <aside class="dock"><button>
          <svg width="14" height="18" viewBox="0 0 14 18" fill="none" stroke="#333"><path d="M1 7V4.500h4M3 2l3 2.500L3 7M8 3h5v3H8zM10.500 6v4M.5 12.500h13v4H.5zM3 14.500h2M8 14.500h3" /></svg>
          <span class="side">图库</span></button></aside>
        <cad-properties></cad-properties>
        <div class="view">
          <div class="files" role="tablist">
            ${files.map((f, i) => html`<cad-tab .label=${f} ?first=${i === 0} ?active=${i === files.length - 1}></cad-tab>`)}
          </div>
          <cad-drawing></cad-drawing>
          <div class="sheets">
            <div class="nav">${arrows.map((d, i) => html`<button aria-label=${["首页", "上一页", "下一页", "末页"][i]}><svg width="16" height="16" viewBox="0 0 16 16"><path d=${d} fill="#666" stroke="#666" stroke-width=".6"/></svg></button>`)}</div>
            ${this.sheet("模型", true)}${this.sheet("布局1")}${this.sheet("布局2")}
          </div>
        </div>
      </main>
      <footer class="status">命令行:</footer>
    `;
  }
}
